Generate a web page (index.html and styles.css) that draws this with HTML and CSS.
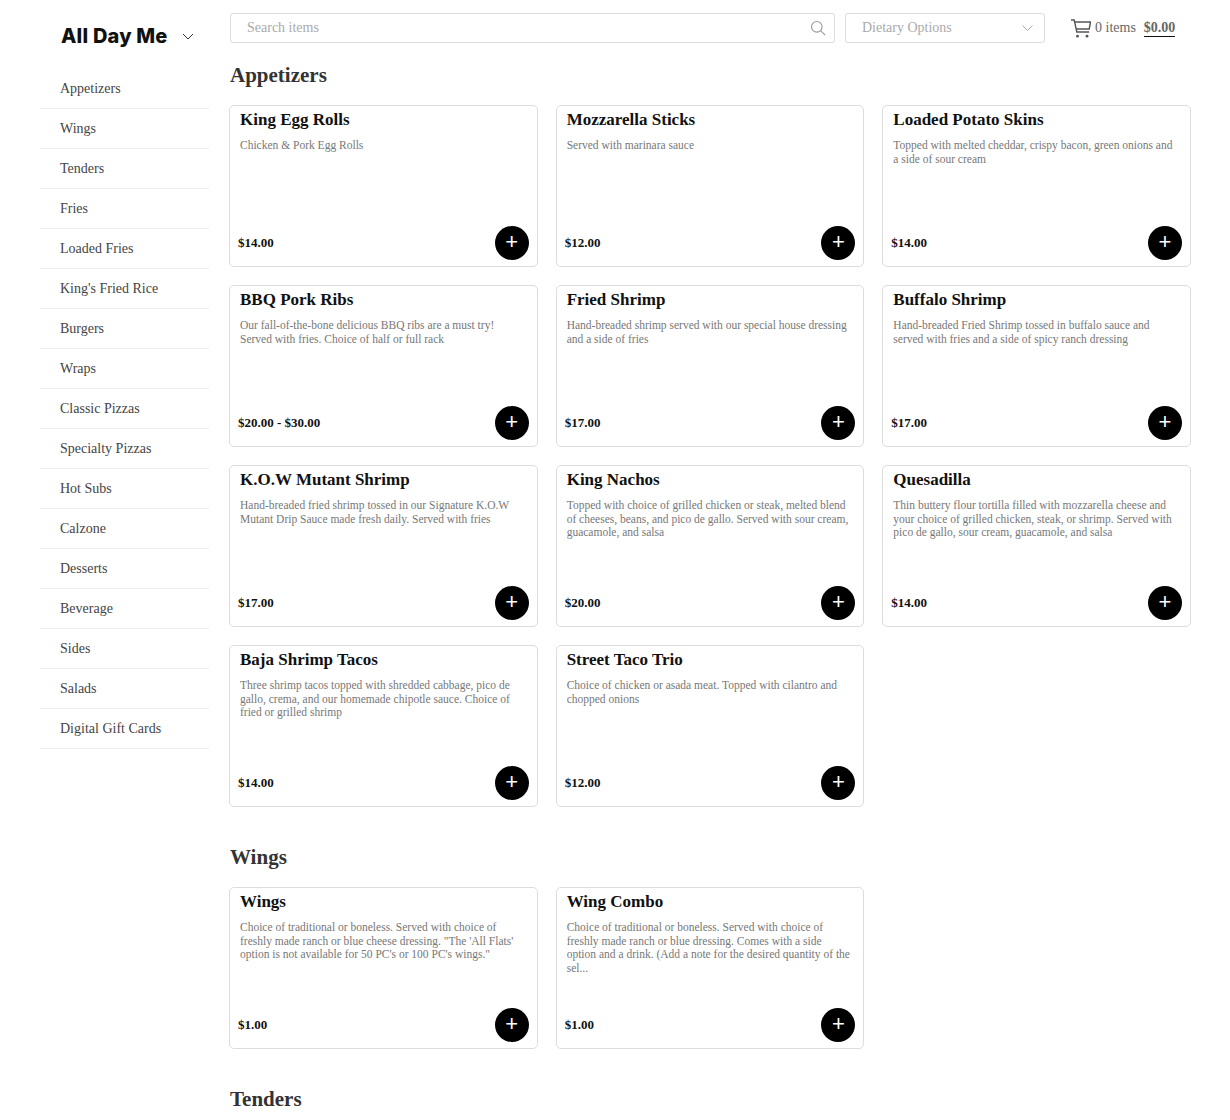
FILE: index.html
```html
<!DOCTYPE html>
<html lang="en">
<head>
    <meta charset="UTF-8">
    <meta name="viewport" content="width=device-width, initial-scale=1.0">
    <title>All Day Me</title>
    <link rel="stylesheet" href="styles.css">
</head>
<body>
    <div class="page">
        <aside class="sidebar">
            <div class="brand">
                <span class="brand-name">All Day Me</span>
                <svg class="brand-chevron" width="12" height="7" viewBox="0 0 12 7"><path d="M1 1l5 5 5-5" fill="none" stroke="#333" stroke-width="1"/></svg>
            </div>
            <ul class="nav">
                <li>Appetizers</li>
                <li>Wings</li>
                <li>Tenders</li>
                <li>Fries</li>
                <li>Loaded Fries</li>
                <li>King's Fried Rice</li>
                <li>Burgers</li>
                <li>Wraps</li>
                <li>Classic Pizzas</li>
                <li>Specialty Pizzas</li>
                <li>Hot Subs</li>
                <li>Calzone</li>
                <li>Desserts</li>
                <li>Beverage</li>
                <li>Sides</li>
                <li>Salads</li>
                <li>Digital Gift Cards</li>
            </ul>
        </aside>

        <main class="content">
            <div class="toolbar">
                <div class="field search">
                    <span>Search items</span>
                    <svg width="16" height="16" viewBox="0 0 16 16"><circle cx="6.8" cy="6.8" r="5.3" fill="none" stroke="#999" stroke-width="1.1"/><path d="M10.8 10.8l4.4 4.4" stroke="#999" stroke-width="1.1"/></svg>
                </div>
                <div class="field dietary">
                    <span>Dietary Options</span>
                    <svg width="11" height="6" viewBox="0 0 11 6"><path d="M.5.5l5 5 5-5" fill="none" stroke="#aaa" stroke-width="1"/></svg>
                </div>
                <div class="cart">
                    <svg width="20" height="19" viewBox="0 0 20 19"><path d="M0 1h3.2l2.6 12h12.4M3.6 3h15.9l-1.3 7H5.2" fill="none" stroke="#555" stroke-width="1.4"/><circle cx="6.5" cy="17.2" r="1.4" fill="#555"/><circle cx="16" cy="17.2" r="1.4" fill="#555"/></svg>
                    <span class="cart-count">0 items</span>
                    <span class="cart-total">$0.00</span>
                </div>
            </div>

            <section class="section">
                <h2>Appetizers</h2>
                <div class="grid">
                    <div class="card">
                        <h3>King Egg Rolls</h3>
                        <p>Chicken &amp; Pork Egg Rolls</p>
                        <div class="card-foot"><span class="price">$14.00</span><button class="add">+</button></div>
                    </div>
                    <div class="card">
                        <h3>Mozzarella Sticks</h3>
                        <p>Served with marinara sauce</p>
                        <div class="card-foot"><span class="price">$12.00</span><button class="add">+</button></div>
                    </div>
                    <div class="card">
                        <h3>Loaded Potato Skins</h3>
                        <p>Topped with melted cheddar, crispy bacon, green onions and a side of sour cream</p>
                        <div class="card-foot"><span class="price">$14.00</span><button class="add">+</button></div>
                    </div>
                    <div class="card">
                        <h3>BBQ Pork Ribs</h3>
                        <p>Our fall-of-the-bone delicious BBQ ribs are a must try! Served with fries. Choice of half or full rack</p>
                        <div class="card-foot"><span class="price">$20.00 - $30.00</span><button class="add">+</button></div>
                    </div>
                    <div class="card">
                        <h3>Fried Shrimp</h3>
                        <p>Hand-breaded shrimp served with our special house dressing and a side of fries</p>
                        <div class="card-foot"><span class="price">$17.00</span><button class="add">+</button></div>
                    </div>
                    <div class="card">
                        <h3>Buffalo Shrimp</h3>
                        <p>Hand-breaded Fried Shrimp tossed in buffalo sauce and served with fries and a side of spicy ranch dressing</p>
                        <div class="card-foot"><span class="price">$17.00</span><button class="add">+</button></div>
                    </div>
                    <div class="card">
                        <h3>K.O.W Mutant Shrimp</h3>
                        <p>Hand-breaded fried shrimp tossed in our Signature K.O.W Mutant Drip Sauce made fresh daily. Served with fries</p>
                        <div class="card-foot"><span class="price">$17.00</span><button class="add">+</button></div>
                    </div>
                    <div class="card">
                        <h3>King Nachos</h3>
                        <p>Topped with choice of grilled chicken or steak, melted blend of cheeses, beans, and pico de gallo. Served with sour cream, guacamole, and salsa</p>
                        <div class="card-foot"><span class="price">$20.00</span><button class="add">+</button></div>
                    </div>
                    <div class="card">
                        <h3>Quesadilla</h3>
                        <p>Thin buttery flour tortilla filled with mozzarella cheese and your choice of grilled chicken, steak, or shrimp. Served with pico de gallo, sour cream, guacamole, and salsa</p>
                        <div class="card-foot"><span class="price">$14.00</span><button class="add">+</button></div>
                    </div>
                    <div class="card">
                        <h3>Baja Shrimp Tacos</h3>
                        <p>Three shrimp tacos topped with shredded cabbage, pico de gallo, crema, and our homemade chipotle sauce. Choice of fried or grilled shrimp</p>
                        <div class="card-foot"><span class="price">$14.00</span><button class="add">+</button></div>
                    </div>
                    <div class="card">
                        <h3>Street Taco Trio</h3>
                        <p>Choice of chicken or asada meat. Topped with cilantro and chopped onions</p>
                        <div class="card-foot"><span class="price">$12.00</span><button class="add">+</button></div>
                    </div>
                </div>
            </section>

            <section class="section">
                <h2>Wings</h2>
                <div class="grid">
                    <div class="card">
                        <h3>Wings</h3>
                        <p>Choice of traditional or boneless. Served with choice of freshly made ranch or blue cheese dressing. "The 'All Flats' option is not available for 50 PC's or 100 PC's wings."</p>
                        <div class="card-foot"><span class="price">$1.00</span><button class="add">+</button></div>
                    </div>
                    <div class="card">
                        <h3>Wing Combo</h3>
                        <p>Choice of traditional or boneless. Served with choice of freshly made ranch or blue dressing. Comes with a side option and a drink. (Add a note for the desired quantity of the sel...</p>
                        <div class="card-foot"><span class="price">$1.00</span><button class="add">+</button></div>
                    </div>
                </div>
            </section>

            <section class="section">
                <h2>Tenders</h2>
            </section>
        </main>
    </div>
</body>
</html>
```

FILE: styles.css
```css
body {
    font-family: 'Liberation Serif', 'Times New Roman', serif;
    background-color: #fff;
    color: #333;
    margin: 0;
    padding: 0;
}
.page {
    display: flex;
    align-items: flex-start;
    height: 1120px;
    overflow: hidden;
    padding-left: 40px;
    box-sizing: border-box;
}
.sidebar {
    width: 169px;
    flex-shrink: 0;
}
.brand {
    display: flex;
    align-items: center;
    height: 69px;
    padding: 3px 0 0 21px;
    box-sizing: border-box;
}
.brand-name {
    font-family: 'Inter', sans-serif;
    font-size: 20px;
    font-weight: 800;
    letter-spacing: 0.2px;
    color: #111;
    width: 121px;
}
.nav {
    list-style: none;
    margin: 0;
    padding: 0;
}
.nav li {
    height: 40px;
    line-height: 39px;
    padding-left: 20px;
    font-size: 14px;
    color: #444;
    border-bottom: 1px solid #eee;
    box-sizing: border-box;
}
.content {
    width: 962px;
    margin-left: 20px;
    flex-shrink: 0;
}
.toolbar {
    display: flex;
    align-items: center;
    height: 30px;
    margin-top: 13px;
    padding-left: 1px;
}
.field {
    display: flex;
    align-items: center;
    justify-content: space-between;
    height: 30px;
    border: 1px solid #ddd;
    border-radius: 3px;
    box-sizing: border-box;
    font-size: 14px;
    color: #aaa;
    padding: 0 8px 0 16px;
}
.search {
    width: 605px;
}
.dietary {
    width: 200px;
    margin-left: 10px;
    padding-right: 11px;
}
.cart {
    display: flex;
    align-items: center;
    margin-left: 26px;
    font-size: 14px;
    color: #666;
}
.cart-count {
    margin-left: 4px;
}
.cart-total {
    margin-left: 8px;
    font-weight: bold;
    border-bottom: 1px solid #111;
    line-height: 17px;
}
.section h2 {
    font-size: 21px;
    line-height: 24px;
    font-weight: bold;
    color: #333;
    margin: 0 0 18px 1px;
}
.section {
    padding-top: 20px;
}
.section + .section {
    padding-top: 38px;
}
.grid {
    display: grid;
    grid-template-columns: repeat(3, 1fr);
    gap: 18px;
}
.card {
    display: flex;
    flex-direction: column;
    height: 162px;
    border: 1px solid #ddd;
    border-radius: 5px;
    box-sizing: border-box;
    padding: 4px 8px 6px 10px;
}
.card h3 {
    font-size: 17px;
    line-height: 20px;
    font-weight: bold;
    color: #111;
    margin: 0 0 9px 0;
}
.card p {
    font-size: 11.5px;
    line-height: 13.5px;
    color: #777;
    margin: 0;
    padding-right: 4px;
}
.card-foot {
    display: flex;
    align-items: center;
    justify-content: space-between;
    margin-top: auto;
    margin-left: -2px;
}
.price {
    font-size: 13px;
    font-weight: bold;
    color: #111;
}
.add {
    width: 34px;
    height: 34px;
    border: none;
    border-radius: 50%;
    background-color: #000;
    color: #fff;
    font-family: 'Liberation Sans', Arial, sans-serif;
    font-size: 22px;
    line-height: 30px;
    padding: 0 0 3px 0;
    cursor: pointer;
}
```
